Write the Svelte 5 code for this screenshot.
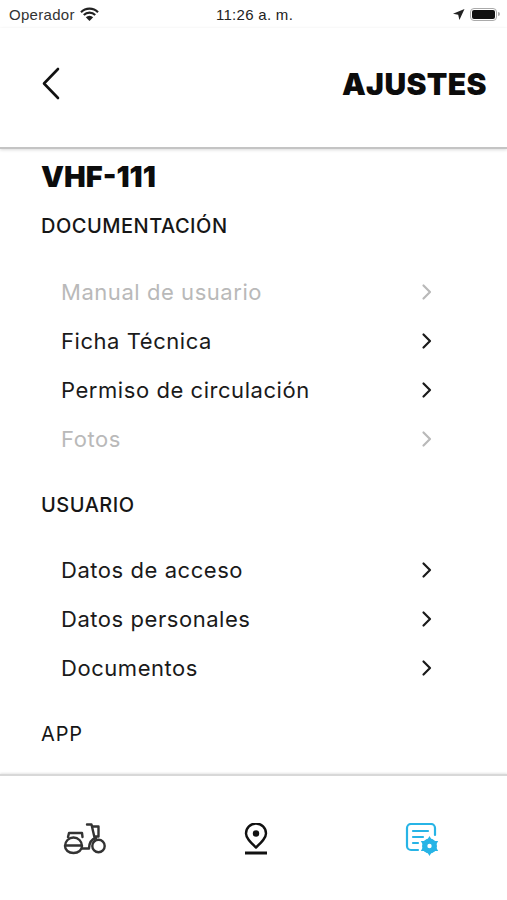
<script>
  const sections = [
    {
      title: 'DOCUMENTACIÓN',
      items: [
        { label: 'Manual de usuario', disabled: true },
        { label: 'Ficha Técnica' },
        { label: 'Permiso de circulación' },
        { label: 'Fotos', disabled: true },
      ],
    },
    {
      title: 'USUARIO',
      items: [{ label: 'Datos de acceso' }, { label: 'Datos personales' }, { label: 'Documentos' }],
    },
  ];
</script>

<div class="screen">
  <div class="status">
    <div class="status-left">
      <span>Operador</span>
      <svg width="19" height="14" viewBox="0 0 19 14">
        <path d="M1 5.200a12 12 0 0 1 17 0M3.800 8a8 8 0 0 1 11.400 0" fill="none" stroke="#222" stroke-width="2.200" />
        <path d="M9.500 14L5.800 10.200a5.200 5.200 0 0 1 7.400 0z" fill="#222" />
      </svg>
    </div>
    <span class="time">11:26 a. m.</span>
    <div class="status-right">
      <svg width="13" height="13" viewBox="0 0 13 13"><path d="M12.500 1L1 5.800l5.200 1 1.200 5.200z" fill="#222" /></svg>
      <div class="battery"><div class="battery-fill"></div></div>
      <div class="battery-cap"></div>
    </div>
  </div>

  <header>
    <svg width="19" height="33" viewBox="0 0 19 33">
      <path d="M17 2L3 16.500 17 31" fill="none" stroke="#111" stroke-width="2.600" stroke-linecap="round" stroke-linejoin="round" />
    </svg>
    <h1>AJUSTES</h1>
  </header>

  <main>
    <h2>VHF-111</h2>
    {#each sections as section, i}
      <h3 class:first={i === 0}>{section.title}</h3>
      <ul class:tight={i > 0}>
        {#each section.items as item}
          <li class:disabled={item.disabled}>
            <span>{item.label}</span>
            <svg width="12" height="18" viewBox="0 0 12 18">
              <path d="M2.500 2.500L9 9l-6.500 6.500" fill="none" stroke="currentColor" stroke-width="2.200" stroke-linecap="round" stroke-linejoin="round" />
            </svg>
          </li>
        {/each}
      </ul>
    {/each}
    <h3 class="app">APP</h3>
  </main>

  <nav>
    <svg width="44" height="34" viewBox="0 0 44 34" fill="none" stroke="#333" stroke-width="2.400" stroke-linecap="round" stroke-linejoin="round">
      <circle cx="35.500" cy="23" r="6.200" />
      <path d="M2 23a8.500 8.500 0 0 1 17 0c0 4-3.500 7-8.500 7S2 27 2 23zM2 22.500h17" />
      <path d="M5 14l1-4h13l.5 4" />
      <path d="M19 25.500h7c0-5 2-9 7-10.500" />
      <path d="M24 1.500h4.500l3 13M30 3.500h5.500v10h-4" />
    </svg>
    <svg width="26" height="34" viewBox="0 0 26 34" fill="none" stroke="#111" stroke-width="2.400">
      <path d="M13 24.500C7 19 3 15 3 10.500a10 10 0 0 1 20 0C23 15 19 19 13 24.500z" stroke-linejoin="round" />
      <circle cx="13" cy="10.500" r="3.200" fill="#111" stroke="none" />
      <path d="M2 30h22" stroke-width="3" />
    </svg>
    <svg width="34" height="34" viewBox="0 0 34 34" fill="none" stroke="#27b4e6" stroke-width="2.200" stroke-linecap="round">
      <path d="M13 27H6a4 4 0 0 1-4-4V5a4 4 0 0 1 4-4h20a4 4 0 0 1 4 4v7" />
      <path d="M8 8h15M8 14h10M8 20h5" />
      <path d="M24.500 13l8.700 15H15.800zM24.500 33l-8.700-15h17.400z" fill="#27b4e6" stroke="none" />
      <circle cx="24.500" cy="23" r="7.500" fill="#27b4e6" stroke="none" />
      <circle cx="24.500" cy="23" r="2.200" fill="#fff" stroke="none" />
    </svg>
  </nav>
</div>

<style>
  :global(body) {
    margin: 0;
    background: #fff;
  }
  .screen {
    width: 507px;
    height: 900px;
    display: flex;
    flex-direction: column;
    overflow: hidden;
    font-family: Inter, sans-serif;
    color: #111;
  }
  .status {
    height: 28px;
    flex: none;
    display: grid;
    grid-template-columns: 1fr auto 1fr;
    align-items: center;
    padding: 0 7px 0 9px;
    font-family: 'Liberation Sans', sans-serif;
    font-size: 15px;
    color: #333;
  }
  .status-left {
    display: flex;
    align-items: center;
    gap: 5px;
  }
  .status-left span {
    letter-spacing: 0.3px;
  }
  .time {
    font-weight: 500;
    color: #222;
    letter-spacing: 0.3px;
  }
  .status-right {
    display: flex;
    align-items: center;
    justify-content: flex-end;
    gap: 5px;
  }
  .battery {
    width: 27px;
    height: 13px;
    box-sizing: border-box;
    border: 1.500px solid #aaa;
    border-radius: 4px;
    padding: 1px;
  }
  .battery-fill {
    height: 100%;
    background: #111;
    border-radius: 2px;
  }
  .battery-cap {
    width: 2px;
    height: 4px;
    margin-left: -4px;
    background: #aaa;
    border-radius: 0 2px 2px 0;
  }
  header {
    height: 121px;
    flex: none;
    box-sizing: border-box;
    padding: 0 20px 8px 41px;
    display: flex;
    align-items: center;
    justify-content: space-between;
    border-bottom: 2px solid #c4c4c4;
    box-shadow: 0 1px 3px rgba(0, 0, 0, 0.15);
  }
  h1 {
    margin: 0;
    font-size: 30px;
    font-weight: 900;
    letter-spacing: 0.4px;
    color: #0c0c0c;
  }
  main {
    flex: 1;
    padding: 0 41px;
    min-height: 0;
  }
  h2 {
    margin: 10px 0 0;
    font-size: 29px;
    line-height: 36px;
    font-weight: 900;
    color: #0c0c0c;
  }
  h3 {
    margin: 30px 0 0;
    font-size: 20px;
    line-height: 24px;
    font-weight: 500;
    letter-spacing: 0.5px;
    color: #161616;
  }
  h3.first {
    margin-top: 19px;
  }
  h3.app {
    font-weight: 400;
    letter-spacing: 0.9px;
  }
  ul {
    list-style: none;
    margin: 29px 0 0;
    padding: 0 33px 0 20px;
  }
  ul.tight {
    margin-top: 28px;
  }
  li {
    height: 49px;
    display: flex;
    align-items: center;
    justify-content: space-between;
    font-size: 22px;
    letter-spacing: 0.55px;
    color: #1a1a1a;
  }
  li.disabled {
    color: #b9b9b9;
  }
  nav {
    height: 126px;
    flex: none;
    box-sizing: border-box;
    padding: 47px 68px 43px 63px;
    display: flex;
    align-items: center;
    justify-content: space-between;
    border-top: 2px solid #d8d8d8;
    box-shadow: 0 -1px 2px rgba(0, 0, 0, 0.1);
  }
</style>
